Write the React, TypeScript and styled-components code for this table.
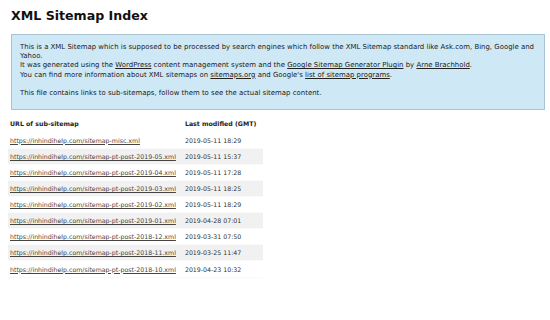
import React from "react";
import styled, { createGlobalStyle } from "styled-components";

const GlobalStyle = createGlobalStyle`
  html, body {
    margin: 0;
    padding: 0;
    background: #fff;
  }
  body {
    font-family: "DejaVu Sans", Verdana, sans-serif;
    color: #333;
  }
`;

const Page = styled.div`
  padding: 6px 5px 0 8px;
`;

const Title = styled.h1`
  margin: 0 0 8px 3px;
  font-size: 12.6px;
  font-weight: bold;
  color: #111;
  line-height: 20px;
`;

const Intro = styled.div`
  margin: 0 0 5px 3px;
  background: #cfe8f5;
  border: 1px solid #a9c4d2;
  padding: 8px 8px 11px 8px;
  font-size: 6.95px;
  line-height: 9.2px;
  color: #222;

  p {
    margin: 0 0 9.2px 0;
  }
  p:last-child {
    margin-bottom: 0;
  }
  a {
    color: #222;
  }
`;

const Table = styled.table`
  border-collapse: collapse;
  font-size: 6.25px;
  color: #333;
`;

const HeadCell = styled.th`
  text-align: left;
  font-weight: bold;
  padding: 0 7px 0 2px;
  height: 17px;
  color: #222;
`;

const Row = styled.tr<{ shaded: boolean }>`
  background: ${(p) => (p.shaded ? "#f1f1f1" : "transparent")};
  border-bottom: 1px solid #fafafa;
`;

const Cell = styled.td`
  padding: 0 7px 0 2px;
  height: 16.1px;
  box-sizing: border-box;
  white-space: nowrap;

  a {
    color: #444;
  }
`;

const rows: [string, string][] = [
  ["https://inhindihelp.com/sitemap-misc.xml", "2019-05-11 18:29"],
  ["https://inhindihelp.com/sitemap-pt-post-2019-05.xml", "2019-05-11 15:37"],
  ["https://inhindihelp.com/sitemap-pt-post-2019-04.xml", "2019-05-11 17:28"],
  ["https://inhindihelp.com/sitemap-pt-post-2019-03.xml", "2019-05-11 18:25"],
  ["https://inhindihelp.com/sitemap-pt-post-2019-02.xml", "2019-05-11 18:29"],
  ["https://inhindihelp.com/sitemap-pt-post-2019-01.xml", "2019-04-28 07:01"],
  ["https://inhindihelp.com/sitemap-pt-post-2018-12.xml", "2019-03-31 07:50"],
  ["https://inhindihelp.com/sitemap-pt-post-2018-11.xml", "2019-03-25 11:47"],
  ["https://inhindihelp.com/sitemap-pt-post-2018-10.xml", "2019-04-23 10:32"],
];

const App: React.FC = () => {
  return (
    <>
      <GlobalStyle />
      <Page>
        <Title>XML Sitemap Index</Title>
        <Intro>
          <p>
            This is a XML Sitemap which is supposed to be processed by search
            engines which follow the XML Sitemap standard like Ask.com, Bing,
            Google and Yahoo.
            <br />
            It was generated using the <a href="#">WordPress</a> content
            management system and the{" "}
            <a href="#">Google Sitemap Generator Plugin</a> by{" "}
            <a href="#">Arne Brachhold</a>.
            <br />
            You can find more information about XML sitemaps on{" "}
            <a href="#">sitemaps.org</a> and Google's{" "}
            <a href="#">list of sitemap programs</a>.
          </p>
          <p>
            This file contains links to sub-sitemaps, follow them to see the
            actual sitemap content.
          </p>
        </Intro>
        <Table>
          <thead>
            <tr>
              <HeadCell>URL of sub-sitemap</HeadCell>
              <HeadCell>Last modified (GMT)</HeadCell>
            </tr>
          </thead>
          <tbody>
            {rows.map(([url, date], i) => (
              <Row key={url} shaded={i % 2 === 1}>
                <Cell>
                  <a href="#">{url}</a>
                </Cell>
                <Cell>{date}</Cell>
              </Row>
            ))}
          </tbody>
        </Table>
      </Page>
    </>
  );
};

export default App;
